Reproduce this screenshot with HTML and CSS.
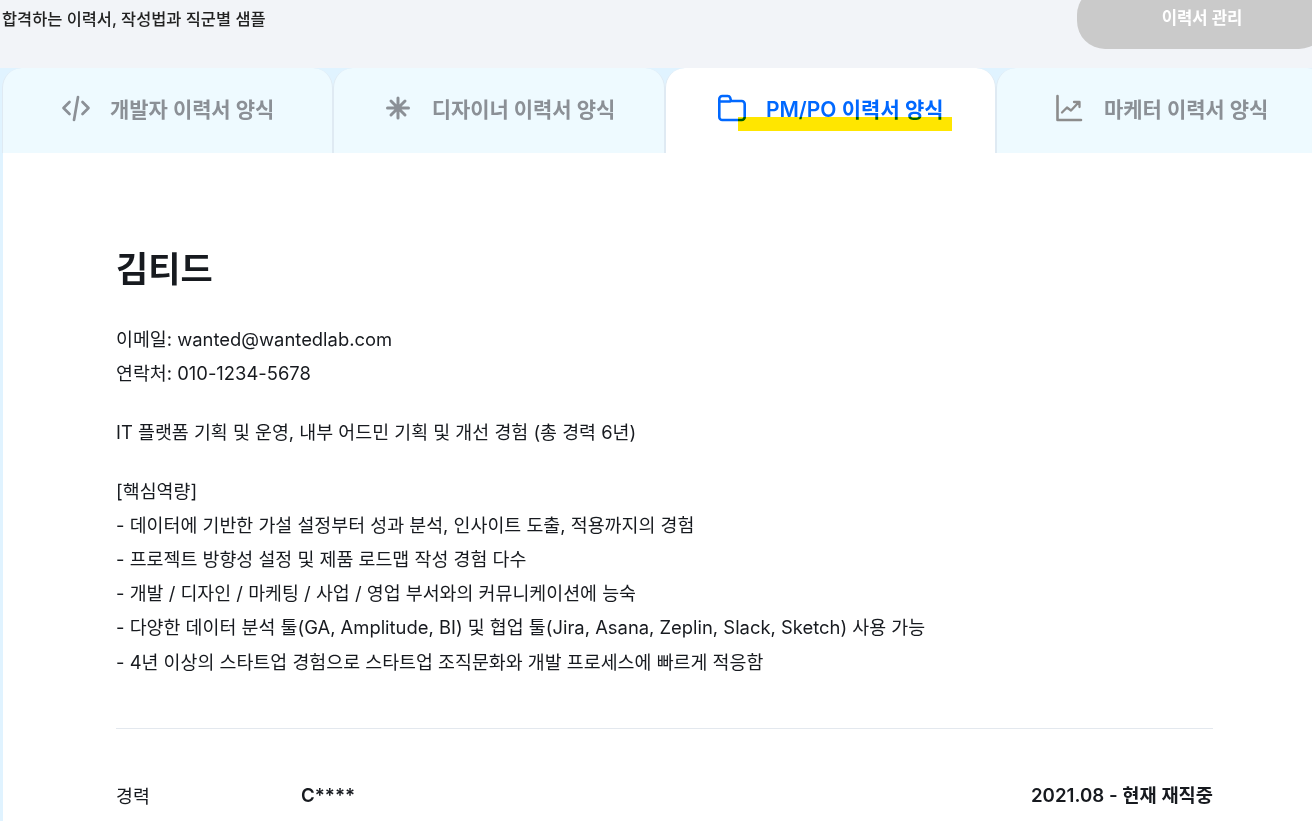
FILE: index.html
```html
<!DOCTYPE html>
<html lang="ko">
<head>
<meta charset="utf-8">
<title>이력서 양식</title>
<link rel="stylesheet" href="styles.css">
</head>
<body>
<header class="top">
  <p class="lead">합격하는 이력서, 작성법과 직군별 샘플</p>
  <button class="manage">이력서 관리</button>
</header>
<nav class="tabs">
  <a class="tab">
    <svg class="icon" viewBox="0 0 30 30" fill="none" stroke="currentColor" stroke-width="2.700" stroke-linecap="round" stroke-linejoin="round"><path d="M8.500 9 2.500 15l6 6M21.500 9l6 6-6 6M17 4l-4 23"/></svg>
    <span>개발자 이력서 양식</span>
  </a>
  <a class="tab">
    <svg class="icon" viewBox="0 0 30 30" fill="none" stroke="currentColor" stroke-width="3" stroke-linecap="round"><path d="M15 5v20M4.500 15h21M8 8l14 14M22 8 8 22"/></svg>
    <span>디자이너 이력서 양식</span>
  </a>
  <a class="tab active">
    <svg class="icon" viewBox="0 0 30 30" fill="none" stroke="currentColor" stroke-width="2.600" stroke-linejoin="round"><path d="M2.300 6a3 3 0 0 1 3-3h5.500a2.500 2.500 0 0 1 2.300 1.500l1 3.500h10.600a3 3 0 0 1 3 3v13a3 3 0 0 1-3 3H5.300a3 3 0 0 1-3-3zM2.300 8.500h11.500"/></svg>
    <span class="label">PM/PO 이력서 양식<i class="mark"></i></span>
  </a>
  <a class="tab">
    <svg class="icon chart" viewBox="0 0 30 30" fill="none" stroke="currentColor" stroke-width="2.600" stroke-linecap="round" stroke-linejoin="round"><path d="M2.500 3v24H26"/><path d="M7 19.500l5-5 4 3 7.500-8M19 9h5.500v5" stroke-width="2.300"/></svg>
    <span>마케터 이력서 양식</span>
  </a>
</nav>
<main class="sheet">
  <h1 class="name">김티드</h1>
  <p class="block contact">이메일: wanted@wantedlab.com<br>연락처: 010-1234-5678</p>
  <p class="block">IT 플랫폼 기획 및 운영, 내부 어드민 기획 및 개선 경험 (총 경력 6년)</p>
  <p class="block">[핵심역량]<br>- 데이터에 기반한 가설 설정부터 성과 분석, 인사이트 도출, 적용까지의 경험<br>- 프로젝트 방향성 설정 및 제품 로드맵 작성 경험 다수<br>- 개발 / 디자인 / 마케팅 / 사업 / 영업 부서와의 커뮤니케이션에 능숙<br>- 다양한 데이터 분석 툴(GA, Amplitude, BI) 및 협업 툴(Jira, Asana, Zeplin, Slack, Sketch) 사용 가능<br>- 4년 이상의 스타트업 경험으로 스타트업 조직문화와 개발 프로세스에 빠르게 적응함</p>
  <hr class="rule">
  <div class="career">
    <span class="kind">경력</span>
    <strong class="company">C****</strong>
    <strong class="period">2021.08 - 현재 재직중</strong>
  </div>
</main>
</body>
</html>
```
FILE: styles.css
```css
* { box-sizing: border-box; }
html, body { margin: 0; height: 821px; overflow: hidden; }
body {
  background: #fff;
  color: #171a1f;
  font-family: Inter, "Noto Sans CJK KR", "Noto Sans", sans-serif;
  width: 1312px;
}
.top {
  height: 68px;
  background: #f2f4f8;
  display: flex;
  justify-content: space-between;
  align-items: flex-start;
  padding-left: 2px;
  overflow: hidden;
}
.lead {
  margin: 9px 0 0;
  font-size: 16.400px;
  line-height: 20px;
  font-weight: 500;
  color: #222;
}
.manage {
  flex: none;
  width: 250px;
  height: 62px;
  margin: -13px -15px 0 0;
  border: 0;
  border-radius: 28px;
  background: #cacaca;
  color: #fff;
  font: 700 16.700px/24px Inter, "Noto Sans CJK KR", sans-serif;
}
.tabs {
  display: flex;
  height: 85px;
  padding-left: 2px;
  background: #e0f3ff;
  overflow: hidden;
}
.tab {
  flex: none;
  width: 331.330px;
  padding-bottom: 6px;
  border: solid #dfeaf3;
  border-width: 0 1px;
  border-radius: 20px 20px 0 0;
  background: #eefaff;
  color: #8b9096;
  display: flex;
  align-items: center;
  justify-content: center;
  gap: 19px;
  font-size: 21px;
  font-weight: 600;
  letter-spacing: -0.1px;
}
.tab.active { background: #fff; color: #0068ff; letter-spacing: 0; }
.icon { width: 30px; height: 30px; flex: none; }
.chart { color: #8c8c8c; }
.label { position: relative; }
.mark {
  position: absolute;
  left: -28px;
  right: -8px;
  top: 24px;
  height: 14px;
  background: #ffe600;
  mix-blend-mode: multiply;
}
.sheet {
  border-left: 3px solid #e0f3ff;
  padding: 87px 99px 0 113px;
  height: 668px;
  background: #fff;
}
.name {
  margin: 0 0 24px;
  font-size: 35px;
  line-height: 58px;
  font-weight: 700;
}
.block {
  margin: 0 0 24px;
  font-size: 18.400px;
  line-height: 34.200px;
}
.contact { margin-bottom: 25px; }
.rule {
  margin: 49px 0 0;
  border: 0;
  border-top: 1px solid #e3e8ee;
}
.career {
  display: flex;
  align-items: center;
  margin-top: 50px;
  font-size: 18.700px;
  line-height: 34px;
}
.kind { width: 185px; font-size: 18.400px; }
.company, .period { font-weight: 600; }
.period { margin-left: auto; }
```
